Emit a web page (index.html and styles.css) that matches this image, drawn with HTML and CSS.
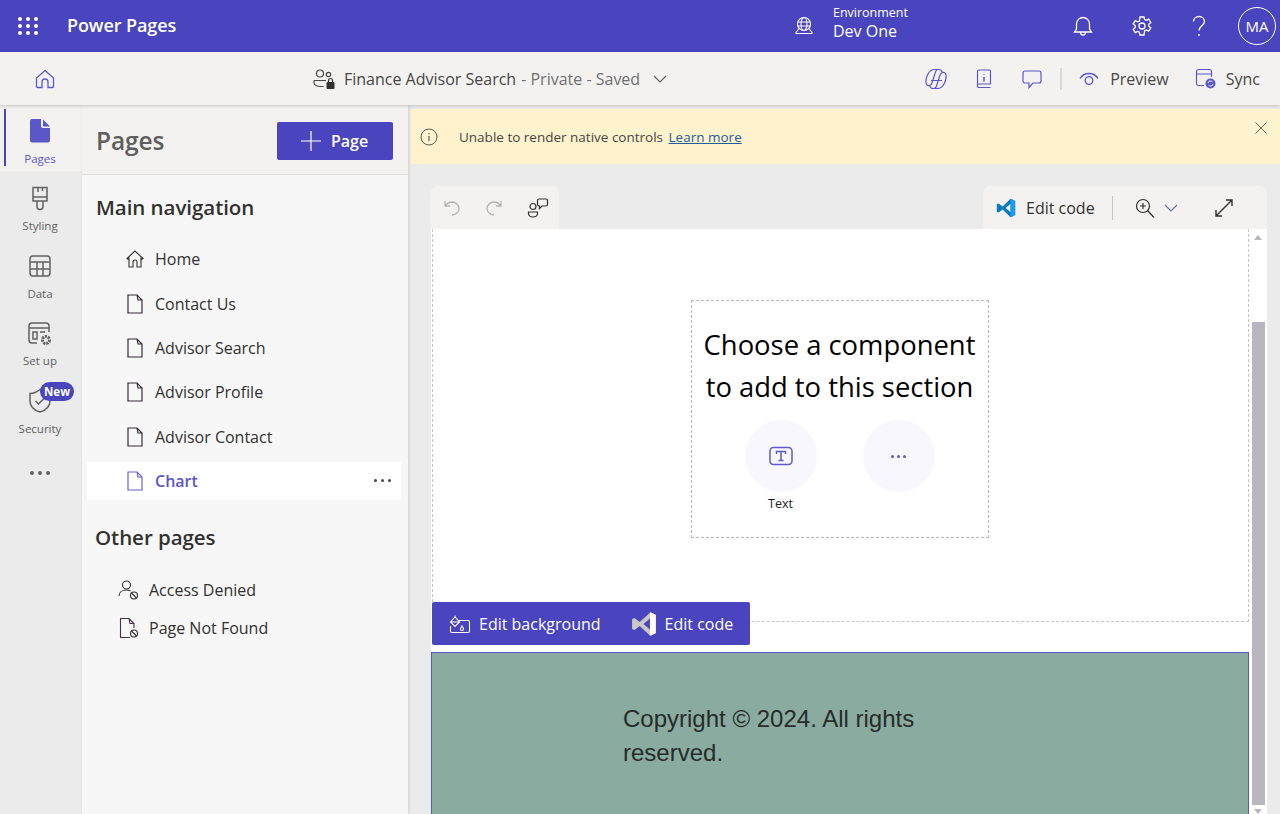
FILE: index.html
```html
<!DOCTYPE html>
<html lang="en">
<head>
<meta charset="utf-8">
<title>Power Pages</title>
<link rel="stylesheet" href="styles.css">
</head>
<body>
<header class="topbar">
  <button class="waffle" aria-label="Apps">
    <svg width="20" height="18" viewBox="0 0 20 18" fill="#fff"><circle cx="2" cy="2" r="2"/><circle cx="10" cy="2" r="2"/><circle cx="18" cy="2" r="2"/><circle cx="2" cy="9" r="2"/><circle cx="10" cy="9" r="2"/><circle cx="18" cy="9" r="2"/><circle cx="2" cy="16" r="2"/><circle cx="10" cy="16" r="2"/><circle cx="18" cy="16" r="2"/></svg>
  </button>
  <div class="brand">Power Pages</div>
  <div class="env">
    <svg class="env-icon" width="20" height="20" viewBox="0 0 20 20" fill="none" stroke="#fff" stroke-width="1.1"><circle cx="10" cy="8" r="6.5"/><ellipse cx="10" cy="8" rx="3" ry="6.5"/><path d="M3.5 6h13M3.5 10h13M5 12.5L2 16.5q-.5 1 .5 1h15q1 0 .5-1L15 12.5"/></svg>
    <div class="env-text"><div class="env-label">Environment</div><div class="env-name">Dev One</div></div>
  </div>
  <div class="top-actions">
    <span class="top-btn"><svg width="22" height="22" viewBox="0 0 22 22" fill="none" stroke="#fff" stroke-width="1.3"><path d="M2.5 17h17l-2-3V9a6.500 6.500 0 0 0-13 0v5zM8.500 17.500a2.500 2.500 0 0 0 5 0"/></svg></span>
    <span class="top-btn top-gear"><svg width="22" height="22" viewBox="0 0 22 22" fill="none" stroke="#fff" stroke-width="1.300"><path d="M9 2h4l.6 2.600 1.700.8 2.400-1.200 2.100 3.300-2 1.700v2l2 1.700-2.100 3.300-2.400-1.200-1.700.8L13 20H9l-.6-2.800-1.700-.8-2.400 1.200-2.100-3.300 2-1.700v-2l-2-1.700 2.100-3.300 2.400 1.200 1.700-.8z"/><circle cx="11" cy="11" r="3"/></svg></span>
    <span class="top-btn"><svg width="22" height="24" viewBox="0 0 22 24" fill="none" stroke="#fff" stroke-width="1.300"><path d="M5.500 7.500C5.500 4.500 8 2.500 11 2.500s5.500 2 5.500 5c0 4-5.500 4.500-5.500 9"/><circle cx="11" cy="21" r=".9" fill="#fff" stroke="none"/></svg></span>
    <span class="avatar">MA</span>
  </div>
</header>

<nav class="subbar">
  <svg class="home-icon" width="20" height="20" viewBox="0 0 20 20" fill="none" stroke="#5b57c9" stroke-width="1.300"><path d="M10 1.500L18.500 9v8.500a1 1 0 0 1-1 1H13V13a3 3 0 0 0-6 0v5.500H2.500a1 1 0 0 1-1-1V9z"/></svg>
  <div class="site-title">
    <svg width="24" height="24" viewBox="0 0 24 24" fill="none" stroke="#484644" stroke-width="1.200"><circle cx="8" cy="6.500" r="3.500"/><circle cx="16.500" cy="7.500" r="2.200"/><path d="M2 13.500h12M2 13.500v2c0 2.500 3 4 6.500 4h3"/><rect x="14.500" y="15" width="8" height="7" rx="1" fill="#323130" stroke="none"/><path d="M16.500 15v-1.500a2 2 0 0 1 4 0V15" stroke="#323130"/></svg>
    <span class="site-name">Finance Advisor Search</span><span class="site-state">- Private - Saved</span>
    <svg class="site-chev" width="14" height="8" viewBox="0 0 14 8" fill="none" stroke="#605e5c" stroke-width="1.100"><path d="M1 1l6 6 6-6"/></svg>
  </div>
  <div class="sub-actions">
    <svg class="sa-copilot" width="24" height="22" viewBox="0 0 24 22" fill="none" stroke="#5b57c9" stroke-width="1.200"><path d="M10.500 1.500c-3 0-5 1.500-6.500 4.500C2.500 9 1.500 12 2 15c.3 2 2 3 3.500 2.500 1.500-.5 2.500-2 3-4l2.500-8c.5-2 1.500-4 3-4z"/><path d="M13.500 20.500c3 0 5-1.500 6.500-4.500 1.500-3 2.500-6 2-9-.3-2-2-3-3.500-2.500-1.500.5-2.500 2-3 4l-2.500 8c-.5 2-1.500 4-3 4z"/><path d="M14 1.500h1c1.500 0 2.700 1 3.200 2.700M10 20.500H9c-1.500 0-2.700-1-3.200-2.700M7 12.500h11"/></svg>
    <svg class="sa-book" width="18" height="20" viewBox="0 0 18 20" fill="none" stroke="#5b57c9" stroke-width="1.200"><path d="M2.500 16V2.500a1.500 1.500 0 0 1 1.500-1.500h10.500a1 1 0 0 1 1 1V15H4a1.700 1.700 0 0 0 0 3.500h11.500"/><path d="M9 5.500v.8M9 8v4.500" stroke-width="1.500"/></svg>
    <svg class="sa-chat" width="20" height="20" viewBox="0 0 20 20" fill="none" stroke="#5b57c9" stroke-width="1.200"><path d="M3 2h14a2 2 0 0 1 2 2v8a2 2 0 0 1-2 2h-6l-4 4.500V14H3a2 2 0 0 1-2-2V4a2 2 0 0 1 2-2z"/></svg>
    <span class="sa-sep"></span>
    <svg class="sa-eye" width="20" height="14" viewBox="0 0 20 14" fill="none" stroke="#5b57c9" stroke-width="1.300"><path d="M1 6.500C3 3 6 1.500 10 1.500s7 1.500 9 5"/><circle cx="10" cy="8.500" r="3.800"/></svg>
    <span class="sa-text sa-preview">Preview</span>
    <svg class="sa-sync" width="21" height="21" viewBox="0 0 21 21" fill="none" stroke="#5b57c9" stroke-width="1.200"><path d="M9 17.500H3.500a2 2 0 0 1-2-2V3.500a2 2 0 0 1 2-2h11a2 2 0 0 1 2 2V9M1.500 6h15"/><circle cx="15.500" cy="15.500" r="5" fill="#5b57c9" stroke="none"/><path d="M13 15a2.500 2.500 0 0 1 4.500-1M18 16a2.500 2.500 0 0 1-4.500 1" stroke="#fff" stroke-width=".9"/></svg>
    <span class="sa-text">Sync</span>
  </div>
</nav>

<div class="workspace">
  <aside class="rail">
    <div class="rail-item rail-active">
      <svg width="24" height="26" viewBox="0 0 24 26" fill="#5b57c9"><path d="M4 1h9v7a2 2 0 0 0 2 2h7v12.500a2 2 0 0 1-2 2H4a2 2 0 0 1-2-2V3a2 2 0 0 1 2-2z"/><path d="M15 1.500l7 7h-6.500a.5.500 0 0 1-.5-.5z"/></svg>
      <span>Pages</span>
    </div>
    <div class="rail-item">
      <svg width="24" height="26" viewBox="0 0 24 26" fill="none" stroke="#616161" stroke-width="1.500"><path d="M5 1.500h14V15H5zM5 11h14M10 1.500V6M14.500 1.500V5M9 15v5.500a3 3 0 0 0 6 0V15"/></svg>
      <span>Styling</span>
    </div>
    <div class="rail-item">
      <svg width="24" height="26" viewBox="0 0 24 26" fill="none" stroke="#616161" stroke-width="1.500"><rect x="2" y="3" width="20" height="20" rx="3"/><path d="M2 9h20M2 16h20M9 9v14M15 9v14"/></svg>
      <span>Data</span>
    </div>
    <div class="rail-item">
      <svg width="26" height="26" viewBox="0 0 26 26" fill="none" stroke="#616161" stroke-width="1.500"><path d="M10 22H5a3 3 0 0 1-3-3V5a3 3 0 0 1 3-3h14a3 3 0 0 1 3 3v6M2 7h20M6 11h4v7H6zM13 11h5"/><circle cx="19" cy="19" r="3.500" stroke="#616161" stroke-width="3" stroke-dasharray="2 1"/></svg>
      <span>Set up</span>
    </div>
    <div class="rail-item rail-new">
      <svg width="24" height="26" viewBox="0 0 24 26" fill="none" stroke="#616161" stroke-width="1.500"><path d="M2 5.500c4 0 7-1.500 10-4 3 2.500 6 4 10 4V13c0 5-3.500 9-10 11C5.500 22 2 18 2 13z"/><path d="M7.500 13l3 3 6-6"/></svg>
      <span>Security</span>
      <b class="new-badge">New</b>
    </div>
    <div class="rail-more"><i></i><i></i><i></i></div>
  </aside>

  <section class="panel">
    <div class="panel-head">
      <h1>Pages</h1>
      <button class="add-page">
        <svg width="20" height="20" viewBox="0 0 20 20" stroke="#fff" stroke-width="1.200"><path d="M0 10h20M10 0v20"/></svg>
        <span>Page</span>
      </button>
    </div>
    <h2 class="group-title group-main">Main navigation</h2>
    <ul class="page-list">
      <li class="page-row"><svg class="row-icon" width="18" height="18" viewBox="0 0 18 18" fill="none" stroke="#323130" stroke-width="1.100"><path d="M9 1L1 8.500l1 .8L3 8.500V17h4v-5a2 2 0 0 1 4 0v5h4V8.500l1 .8 1-.8z"/></svg>Home</li>
      <li class="page-row"><svg class="row-icon" width="18" height="20" viewBox="0 0 18 20" fill="none" stroke="#323130" stroke-width="1.200"><path d="M2 1h9l5 5v13H2zM11 1l1 5h4" stroke="#3a2a3a"/></svg>Contact Us</li>
      <li class="page-row"><svg class="row-icon" width="18" height="20" viewBox="0 0 18 20" fill="none" stroke="#323130" stroke-width="1.200"><path d="M2 1h9l5 5v13H2zM11 1l1 5h4" stroke="#3a2a3a"/></svg>Advisor Search</li>
      <li class="page-row"><svg class="row-icon" width="18" height="20" viewBox="0 0 18 20" fill="none" stroke="#323130" stroke-width="1.200"><path d="M2 1h9l5 5v13H2zM11 1l1 5h4" stroke="#3a2a3a"/></svg>Advisor Profile</li>
      <li class="page-row"><svg class="row-icon" width="18" height="20" viewBox="0 0 18 20" fill="none" stroke="#323130" stroke-width="1.200"><path d="M2 1h9l5 5v13H2zM11 1l1 5h4" stroke="#3a2a3a"/></svg>Advisor Contact</li>
      <li class="page-row page-current"><svg class="row-icon" width="18" height="20" viewBox="0 0 18 20" fill="none" stroke="#6a62cf" stroke-width="1.200"><path d="M2 1h9l5 5v13H2zM11 1l1 5h4"/></svg>Chart<span class="row-more"><i></i><i></i><i></i></span></li>
    </ul>
    <h2 class="group-title group-other">Other pages</h2>
    <ul class="other-list">
      <li class="other-row"><svg width="22" height="22" viewBox="0 0 22 22" fill="none" stroke="#323130" stroke-width="1.100"><circle cx="8.500" cy="6" r="4"/><path d="M1 17c0-3.500 3-6 7.500-6 1.500 0 3 .3 4 1"/><circle cx="16" cy="16.500" r="3.500"/><path d="M13.500 14l5 5"/></svg>Access Denied</li>
      <li class="other-row"><svg width="22" height="22" viewBox="0 0 22 22" fill="none" stroke="#323130" stroke-width="1.100"><path d="M12 20.500H2.500V1.500H11l5 5V11M11 1.500l1 5h4" stroke="#4a3048"/><circle cx="16" cy="16.500" r="3.500"/><path d="M13.500 14l5 5"/></svg>Page Not Found</li>
    </ul>
  </section>

  <main class="main">
    <div class="banner">
      <svg width="18" height="18" viewBox="0 0 18 18" fill="none" stroke="#605e5c" stroke-width="1"><circle cx="9" cy="9" r="8"/><path d="M9 8v5M9 5v1.300" stroke-width="1.200"/></svg>
      <span class="banner-text">Unable to render native controls</span>
      <a class="banner-link" href="#">Learn more</a>
      <svg class="banner-close" width="12" height="12" viewBox="0 0 12 12" stroke="#605e5c" stroke-width="1"><path d="M.5.500l11 11M11.500.500l-11 11"/></svg>
    </div>

    <div class="tools">
      <div class="tool-group tool-left">
        <svg width="16" height="18" viewBox="0 0 16 18" fill="none" stroke="#b5b3b1" stroke-width="1.300"><path d="M1 2v5h5M1 7c2-2.500 4-4 7-4 4 0 7 3 7 6.500S12 16 8 16"/></svg>
        <svg width="16" height="18" viewBox="0 0 16 18" fill="none" stroke="#b5b3b1" stroke-width="1.300"><path d="M15 2v5h-5M15 7c-2-2.500-4-4-7-4-4 0-7 3-7 6.500S4 16 8 16"/></svg>
        <svg width="22" height="22" viewBox="0 0 22 22" fill="none" stroke="#323130" stroke-width="1.200"><circle cx="6" cy="9.500" r="3"/><path d="M1.500 15h9v1.500c0 2-2 3.500-4.500 3.500s-4.500-1.500-4.500-3.500z"/><path d="M12 2h7a1.500 1.500 0 0 1 1.500 1.500v4A1.500 1.500 0 0 1 19 9h-4l-2.500 2.500V9H12a1.500 1.500 0 0 1-1.500-1.500v-4A1.500 1.500 0 0 1 12 2z"/></svg>
      </div>
      <div class="tool-group tool-right">
        <svg class="vs-blue" width="20" height="20" viewBox="0 0 24 24"><path fill="#0a78c4" d="M17.500 1L23 3.500v17L17.500 23 8 13.800 3.200 17.500 1 16.500v-9l2.200-1L8 10.200zM17.500 7L11.500 12l6 5z" fill-rule="evenodd"/><path fill="#1f9cf0" d="M17.500 1L23 3.500v17L17.500 23z"/></svg>
        <span class="tool-text">Edit code</span>
        <span class="tool-sep"></span>
        <svg class="tool-zoom" width="20" height="20" viewBox="0 0 20 20" fill="none" stroke="#323130" stroke-width="1.200"><circle cx="8" cy="8" r="6.500"/><path d="M12.500 12.500L19 19.500M5 8h6M8 5v6"/></svg>
        <svg class="tool-chev" width="14" height="8" viewBox="0 0 14 8" fill="none" stroke="#6d6ba8" stroke-width="1.100"><path d="M1 1l6 6 6-6"/></svg>
        <svg class="tool-expand" width="18" height="18" viewBox="0 0 18 18" fill="none" stroke="#323130" stroke-width="1.400"><path d="M11 1h6v6M17 1L1 17M1 11v6h6"/></svg>
      </div>
    </div>

    <div class="canvas">
      <div class="canvas-page">
        <div class="section">
          <div class="chooser">
            <div class="chooser-title">Choose a component to add to this section</div>
            <div class="chooser-options">
              <div class="option">
                <span class="option-circle">
                  <svg width="24" height="20" viewBox="0 0 24 20" fill="none" stroke="#5f5bc9" stroke-width="1.500"><rect x="1" y="1.500" width="22" height="17" rx="3.500"/><path d="M7.500 8V5.500h9V8M12 5.500v9M9.500 14.500h5"/></svg>
                </span>
                <span class="option-label">Text</span>
              </div>
              <div class="option">
                <span class="option-circle"><span class="mini-dots"><i></i><i></i><i></i></span></span>
              </div>
            </div>
          </div>
        </div>
        <div class="edit-bar">
          <svg width="22" height="20" viewBox="0 0 22 20" fill="none" stroke="#fff" stroke-width="1.100"><path d="M6 1.500v2M6 3L1.500 8 6 12.500 10.500 8zM1.500 8h9M10 6.500h9a1.500 1.500 0 0 1 1.500 1.500v9a1.500 1.500 0 0 1-1.500 1.500H3A1.500 1.500 0 0 1 1.500 17v-5M13 12c1 1.500 1.500 2 1.500 3a1.300 1.300 0 0 1-3 0c0-1 .5-1.500 1.500-3z"/></svg>
          <span class="edit-label">Edit background</span>
          <svg class="vs-white" width="26" height="26" viewBox="0 0 24 24"><path fill="#c8c8c8" d="M17.500 1.500L8 10.200 3.200 6.500 1 7.500v9l2.200 1L8 13.800l9.500 8.700V17l-6-5 6-5z"/><path fill="#fff" d="M17.500 1L23 3.500v17L17.500 23z"/></svg>
          <span class="edit-label">Edit code</span>
        </div>
        <footer class="page-footer">
          <p>Copyright © 2024. All rights reserved.</p>
        </footer>
      </div>
      <div class="scrollbar">
        <span class="arrow-up"></span>
        <span class="thumb"></span>
        <span class="arrow-down"></span>
      </div>
    </div>
  </main>
</div>
</body>
</html>
```

FILE: styles.css
```css
* { box-sizing: border-box; }
html, body { height: 100%; }
body {
  margin: 0;
  height: 814px;
  overflow: hidden;
  display: flex;
  flex-direction: column;
  font-family: "Open Sans", "Noto Sans", sans-serif;
  font-size: 16px;
  color: #323130;
  background: #ecebeb;
}
h1, h2, p, ul { margin: 0; padding: 0; }
ul { list-style: none; }
button { border: 0; background: none; padding: 0; font: inherit; color: inherit; }
svg { display: block; flex: none; }

/* top bar */
.topbar {
  height: 52px;
  flex: none;
  background: #4a44bf;
  color: #fff;
  display: flex;
  align-items: center;
  padding-right: 4px;
}
.waffle { margin-left: 18px; width: 20px; }
.brand { margin-left: 29px; margin-top: -2px; font-size: 18px; font-weight: 600; letter-spacing: -.1px; }
.env { margin-left: auto; display: flex; align-items: center; margin-top: -5px; }
.env-icon { margin-right: 19px; margin-top: 5px; }
.env-label { font-size: 12.500px; line-height: 16px; margin-top: -1px; }
.env-name { font-size: 16px; line-height: 22px; margin-top: -1px; }
.top-actions { margin-left: 146px; display: flex; align-items: center; }
.top-btn { width: 58px; display: flex; justify-content: center; }
.top-gear { padding-left: 2px; }
.avatar {
  width: 38px;
  height: 38px;
  margin-left: 10px;
  border: 1px solid #fff;
  border-radius: 50%;
  display: flex;
  align-items: center;
  justify-content: center;
  font-size: 15px;
}

/* second bar */
.subbar {
  height: 53px;
  flex: none;
  background: #f3f2f1;
  display: flex;
  align-items: center;
  padding: 0 20px 0 35px;
  box-shadow: 0 1px 3px rgba(0,0,0,.18);
  position: relative;
  z-index: 2;
}
.site-title { margin-left: 257px; display: flex; align-items: center; font-size: 16px; }
.site-name { margin-left: 8px; color: #484644; }
.site-state { margin-left: 5px; color: #707070; }
.site-chev { margin-left: 13px; }
.sub-actions { margin-left: auto; display: flex; align-items: center; }
.sa-book { margin-left: 27px; }
.sa-chat { margin-left: 29px; }
.sa-sep { width: 2px; height: 22px; background: #d8d8d8; margin: 0 17px 0 18px; }
.sa-text { color: #484644; font-size: 16px; }
.sa-preview { margin-left: 11px; }
.sa-sync { margin-left: 26px; margin-right: 10px; }

/* workspace */
.workspace {
  flex: 1;
  min-height: 0;
  display: grid;
  grid-template-columns: 82px 326px 1fr;
}
.rail {
  background: #ebebeb;
  position: relative;
  padding: 1px 2px 0 0;
  display: flex;
  flex-direction: column;
}
.rail-item {
  height: 67.500px;
  display: flex;
  flex-direction: column;
  align-items: center;
  padding-top: 12px;
  font-size: 11.500px;
  color: #616161;
  position: relative;
}
.rail-item span { margin-top: 6.500px; line-height: 16px; }
.rail-active {
  height: 65px;
  margin-right: -2px;
  padding-right: 2px;
  background: #f3f2f1;
  color: #5b57c9;
}
.rail-active + .rail-item { height: 70px; padding-top: 14.500px; }
.rail-active::before {
  content: "";
  position: absolute;
  left: 4px;
  top: 3px;
  bottom: 5px;
  width: 2px;
  background: #4a44bf;
}
.new-badge {
  position: absolute;
  top: 6px;
  left: 40px;
  width: 34px;
  height: 19px;
  border-radius: 10px;
  background: #4a44bf;
  color: #fff;
  font-size: 11.500px;
  font-weight: 700;
  line-height: 19px;
  text-align: center;
}
.rail-more { display: flex; justify-content: center; gap: 4px; margin-top: 27px; }
.rail-more i { width: 4px; height: 4px; border-radius: 50%; background: #616161; }

/* pages panel */
.panel {
  background: #f7f7f7;
  box-shadow: 1px 0 3px rgba(0,0,0,.12);
  position: relative;
  z-index: 1;
}
.panel-head {
  height: 70px;
  background: #f3f2f1;
  border-bottom: 1px solid #dcdcdc;
  display: flex;
  align-items: center;
  justify-content: space-between;
  padding: 2px 15px 0 14px;
}
.panel-head h1 { font-size: 24.500px; font-weight: 600; color: #605e5c; letter-spacing: -.1px; }
.add-page {
  width: 116px;
  height: 38px;
  background: #4a44bf;
  color: #fff;
  border-radius: 2px;
  display: flex;
  align-items: center;
  padding-left: 24px;
  font-size: 16px;
  font-weight: 600;
}
.add-page span { margin-left: 10px; margin-top: 1px; }
.group-title { font-size: 20.500px; font-weight: 600; color: #323130; line-height: 28px; letter-spacing: -.05px; }
.group-main { margin: 18px 0 0 14px; }
.group-other { margin: 20px 0 0 13px; }
.page-list { margin-top: 16.300px; }
.page-row {
  height: 44.300px;
  display: flex;
  align-items: center;
  padding-left: 39px;
  font-size: 16px;
  color: #323130;
  margin-right: 7px;
  margin-left: 5px;
  position: relative;
}
.row-icon { margin-right: 11px; }
.page-current { z-index: 0; color: #5b57c9; font-weight: 600; }
.page-current::before {
  content: "";
  position: absolute;
  left: 0;
  right: 0;
  top: 3px;
  bottom: 3px;
  background: #fff;
  z-index: -1;
}
.row-more { margin-left: auto; margin-right: 10px; display: flex; gap: 4px; }
.row-more i { width: 3px; height: 3px; border-radius: 50%; background: #484644; }
.other-list { margin-top: 20px; }
.other-row {
  height: 38px;
  display: flex;
  align-items: center;
  padding-left: 36px;
  font-size: 16px;
  gap: 9px;
}

/* main */
.main {
  min-width: 0;
  display: flex;
  flex-direction: column;
  background: #ecebeb;
  padding-top: 4px;
}
.banner {
  height: 55px;
  margin-left: 3px;
  flex: none;
  background: #fff2cc;
  display: flex;
  align-items: center;
  padding: 0 13px 0 9px;
  font-size: 13.500px;
  color: #484644;
}
.banner-text { margin-left: 21px; }
.banner-link { margin-left: 5.500px; color: #1b5e9b; text-decoration: underline; }
.banner-close { margin-left: auto; margin-top: -17px; }
.tools {
  height: 43px;
  margin-top: 22px;
  flex: none;
  display: flex;
  justify-content: space-between;
  padding: 0 13px 0 22px;
}
.tool-group {
  display: flex;
  align-items: center;
  background: #f3f2f1;
  border-radius: 8px 8px 0 0;
}
.tool-left { width: 129px; padding-left: 14px; gap: 26px; }
.tool-left svg:last-child { margin-left: -1px; }
.tool-right { width: 284px; padding-left: 13px; }
.tool-text { margin-left: 10px; font-size: 16px; color: #323130; }
.tool-sep { width: 1px; height: 24px; background: #c8c6c4; margin: 0 22px 0 17px; }
.tool-chev { margin-left: 9px; }
.tool-expand { margin-left: 37px; }

.canvas {
  flex: 1;
  min-height: 0;
  margin: 0 13px 0 23px;
  background: #fff;
  display: flex;
  overflow: hidden;
}
.canvas-page {
  width: 818px;
  flex: none;
  display: flex;
  flex-direction: column;
  position: relative;
}
.section {
  height: 393px;
  margin-left: 1px;
  flex: none;
  border: 1px dashed #c4c4c4;
  border-top: 0;
  display: flex;
  justify-content: center;
  padding: 71px 2px 0 0;
}
.chooser {
  width: 298px;
  height: 238px;
  border: 1px dashed #b8b8b8;
  padding-top: 23px;
  text-align: center;
}
.chooser-title {
  font-size: 27.400px;
  line-height: 42px;
  color: #000;
  padding: 0 8px;
}
.chooser-options { display: flex; gap: 46px; margin-top: 12px; padding-left: 53px; }
.option { width: 72px; display: flex; flex-direction: column; align-items: center; }
.option-circle {
  width: 72px;
  height: 72px;
  border-radius: 50%;
  background: #f8f7fd;
  display: flex;
  align-items: center;
  justify-content: center;
}
.option-label { margin-top: 3px; font-size: 12.500px; line-height: 17px; color: #201f1e; }
.mini-dots { display: flex; gap: 3px; }
.mini-dots i { width: 3px; height: 3px; border-radius: 50%; background: #5f5bc9; }
.edit-bar {
  position: absolute;
  left: 1px;
  top: 373px;
  width: 318px;
  height: 43px;
  background: #4a44bf;
  color: #fff;
  border-radius: 2px;
  display: flex;
  align-items: center;
  padding-left: 17px;
  font-size: 16px;
}
.edit-label { margin-left: 8px; }
.vs-white { margin-left: 30px; }
.page-footer {
  margin-top: 30px;
  flex: 1;
  background: #8aaba0;
  border: 1px solid #5b57c9;
  border-bottom: 0;
  padding: 49px 0 0 191px;
}
.page-footer p {
  width: 320px;
  font-family: "Liberation Sans", Arial, sans-serif;
  font-size: 24px;
  line-height: 34px;
  color: #272c2a;
}
.scrollbar {
  flex: 1;
  position: relative;
  display: flex;
  flex-direction: column;
  align-items: center;
  background: #fff;
}
.arrow-up {
  position: absolute;
  top: 6px;
  border: 4px solid transparent;
  border-top: 0;
  border-bottom: 5px solid #b9b6c0;
}
.thumb {
  position: absolute;
  top: 93px;
  bottom: 9px;
  left: 3px;
  right: 2px;
  background: #b9b6c0;
}
.arrow-down {
  position: absolute;
  bottom: 0;
  border: 4px solid transparent;
  border-bottom: 0;
  border-top: 5px solid #b9b6c0;
}
```
